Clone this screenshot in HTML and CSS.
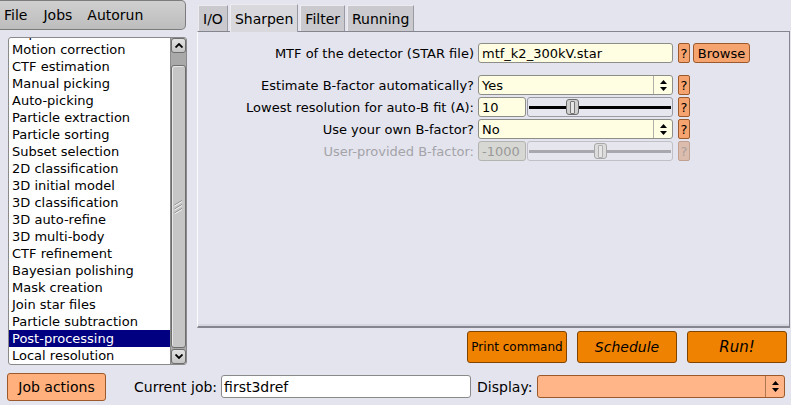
FILE: index.html
```html
<!DOCTYPE html>
<html>
<head>
<meta charset="utf-8">
<link rel="stylesheet" href="styles.css">
</head>
<body>
<div class="app">
  <div class="top">
    <div class="left">
      <div class="menubar"><span class="mi">File</span><span class="mi">Jobs</span><span class="mi">Autorun</span></div>
      <div class="joblist">
        <div class="items">
          <div class="item first">Import</div>
          <div class="item">Motion correction</div>
          <div class="item">CTF estimation</div>
          <div class="item">Manual picking</div>
          <div class="item">Auto-picking</div>
          <div class="item">Particle extraction</div>
          <div class="item">Particle sorting</div>
          <div class="item">Subset selection</div>
          <div class="item">2D classification</div>
          <div class="item">3D initial model</div>
          <div class="item">3D classification</div>
          <div class="item">3D auto-refine</div>
          <div class="item">3D multi-body</div>
          <div class="item">CTF refinement</div>
          <div class="item">Bayesian polishing</div>
          <div class="item">Mask creation</div>
          <div class="item">Join star files</div>
          <div class="item">Particle subtraction</div>
          <div class="item sel">Post-processing</div>
          <div class="item">Local resolution</div>
        </div>
        <div class="scrollbar">
          <div class="sb-btn"><svg width="8" height="5" viewBox="0 0 8 5"><path d="M0.5 4.5 L4 1 L7.5 4.5" fill="none" stroke="#000" stroke-width="1.8"/></svg></div>
          <div class="sb-track">
            <div class="sb-thumb"><svg width="9" height="14" viewBox="0 0 9 14"><path d="M0.5 5 L8 0.5 M0.5 9 L8 4.5 M0.5 13 L8 8.5" stroke="#8a8a8a" stroke-width="1"/><path d="M0.5 6 L8 1.5 M0.5 10 L8 5.5 M0.5 14 L8 9.5" stroke="#f2f2f2" stroke-width="1"/></svg></div>
          </div>
          <div class="sb-btn"><svg width="8" height="5" viewBox="0 0 8 5"><path d="M0.5 0.5 L4 4 L7.5 0.5" fill="none" stroke="#000" stroke-width="1.8"/></svg></div>
        </div>
      </div>
    </div>
    <div class="right">
      <div class="tabs">
        <div class="tab">I/O</div>
        <div class="tab active">Sharpen</div>
        <div class="tab">Filter</div>
        <div class="tab">Running</div>
      </div>
      <div class="panel">
        <div class="form">
          <div class="row gap-after">
            <div class="label">MTF of the detector (STAR file)</div>
            <div class="input wide">mtf_k2_300kV.star</div>
            <div class="help">?</div>
            <div class="browse">Browse</div>
          </div>
          <div class="row">
            <div class="label">Estimate B-factor automatically?</div>
            <div class="choice"><span class="ctext">Yes</span><span class="carrow"><svg width="7" height="11" viewBox="0 0 7 11"><path d="M0 4 L3.5 0 L7 4 Z M0 7 L3.5 11 L7 7 Z" fill="#000"/></svg></span></div>
            <div class="help">?</div>
          </div>
          <div class="row">
            <div class="label">Lowest resolution for auto-B fit (A):</div>
            <div class="input small">10</div>
            <div class="slider"><div class="track"></div><div class="thumb" style="left:38px"></div></div>
            <div class="help">?</div>
          </div>
          <div class="row">
            <div class="label">Use your own B-factor?</div>
            <div class="choice"><span class="ctext">No</span><span class="carrow"><svg width="7" height="11" viewBox="0 0 7 11"><path d="M0 4 L3.5 0 L7 4 Z M0 7 L3.5 11 L7 7 Z" fill="#000"/></svg></span></div>
            <div class="help">?</div>
          </div>
          <div class="row disabled">
            <div class="label">User-provided B-factor:</div>
            <div class="input small">-1000</div>
            <div class="slider"><div class="track"></div><div class="thumb" style="left:66px"></div></div>
            <div class="help">?</div>
          </div>
        </div>
      </div>
      <div class="actions">
        <div class="runbtn print">Print command</div>
        <div class="runbtn italic">Schedule</div>
        <div class="runbtn italic big">Run!</div>
      </div>
    </div>
  </div>
  <div class="bottom">
    <div class="jobactions">Job actions</div>
    <div class="blabel cur">Current job:</div>
    <div class="jobinput">first3dref</div>
    <div class="blabel disp">Display:</div>
    <div class="display"><span class="carrow"><svg width="7" height="11" viewBox="0 0 7 11"><path d="M0 4 L3.5 0 L7 4 Z M0 7 L3.5 11 L7 7 Z" fill="#000"/></svg></span></div>
  </div>
</div>
</body>
</html>
```

FILE: styles.css
```css
* { box-sizing: border-box; }
html, body {
  margin: 0;
  padding: 0;
}
body {
  width: 791px;
  height: 405px;
  overflow: hidden;
  background: #e4e4ee;
  font-family: "DejaVu Sans", sans-serif;
  color: #000;
}
.app {
  display: flex;
  flex-direction: column;
  width: 791px;
  height: 405px;
}
.top {
  display: flex;
  height: 368px;
}
.left {
  width: 197px;
  display: flex;
  flex-direction: column;
}
.menubar {
  width: 186px;
  height: 30px;
  background: linear-gradient(#cfcfcf, #bdbdbd);
  border: 1px solid #7c7c7c;
  border-left: none;
  border-radius: 0 5px 5px 0;
  display: flex;
  align-items: center;
  padding-left: 4px;
  font-size: 14px;
}
.mi { margin-right: 16px; }
.mi:nth-child(2) { margin-right: 15px; }

.joblist {
  margin: 7px 0 0 8px;
  width: 179px;
  height: 328px;
  border: 1px solid #8a8a8a;
  border-radius: 3px;
  background: #fff;
  display: flex;
  overflow: hidden;
}
.items {
  flex: 1;
  overflow: hidden;
  font-size: 13px;
}
.item {
  height: 17px;
  line-height: 17px;
  padding-left: 3px;
  white-space: nowrap;
}
.item.first { margin-top: -14px; }
.item.sel {
  background: #000080;
  color: #fff;
}
.scrollbar {
  width: 16px;
  background: #a9a9a9;
  display: flex;
  flex-direction: column;
  border-left: 1px solid #8c8c8c;
}
.sb-btn {
  height: 15px;
  margin: 0 0 0 0;
  background: linear-gradient(#e2e2e2, #c6c6c6);
  border: 1px solid #6e6e6e;
  border-radius: 3px;
  display: flex;
  align-items: center;
  justify-content: center;
}
.sb-track {
  flex: 1;
  display: flex;
  flex-direction: column;
  padding: 12px 0 1px 0;
}
.sb-thumb {
  flex: 1;
  background: #c6c6c6;
  border: 1px solid #6e6e6e;
  border-radius: 3px;
  box-shadow: inset 1px 1px 0 #e8e8e8;
  display: flex;
  align-items: center;
  justify-content: center;
}

.right {
  flex: 1;
  display: flex;
  flex-direction: column;
  padding-top: 4px;
}
.tabs {
  height: 27px;
  display: flex;
  align-items: flex-end;
  gap: 2px;
  padding-left: 1px;
  font-size: 14px;
}
.tab {
  height: 26px;
  padding: 0 4px;
  background: #c9c9ce;
  border: 1px solid #9a9aa2;
  border-top-color: #ececf0;
  border-left-color: #ececf0;
  border-bottom: none;
  display: flex;
  align-items: center;
}
.tab.active {
  height: 28px;
  margin-bottom: -1px;
  background: #d8d8dd;
  position: relative;
  z-index: 1;
}
.panel {
  height: 297px;
  margin-right: 1px;
  border-top: 1px solid #85858f;
  border-left: 1px solid #fbfbfd;
  border-right: 1px solid #85858f;
  border-bottom: 2px solid #85858f;
  box-shadow: inset 0 -2px 0 #d6d6df;
}
.form {
  padding-top: 11px;
  font-size: 13px;
}
.row {
  display: flex;
  align-items: center;
  height: 20px;
  margin-bottom: 2px;
}
.row.gap-after { margin-bottom: 12px; }
.label {
  width: 280px;
  padding-right: 4px;
  text-align: right;
  white-space: nowrap;
}
.input {
  height: 20px;
  background: #fffee2;
  border: 1px solid #8e8e88;
  border-radius: 3px;
  padding-left: 3px;
  display: flex;
  align-items: center;
  white-space: nowrap;
}
.input.wide { width: 195px; }
.input.small { width: 48px; }
.help {
  width: 12px;
  height: 20px;
  margin-left: 5px;
  background: #f6a46f;
  border: 1px solid #9c5a2c;
  border-radius: 2px;
  display: flex;
  align-items: center;
  justify-content: center;
  font-size: 13px;
}
.browse {
  width: 57px;
  height: 20px;
  margin-left: 3px;
  background: #f6a46f;
  border: 1px solid #9c5a2c;
  border-radius: 3px;
  display: flex;
  align-items: center;
  justify-content: center;
}
.choice {
  width: 195px;
  height: 20px;
  background: #fffee2;
  border: 1px solid #8e8e88;
  border-radius: 3px;
  display: flex;
  align-items: center;
}
.ctext {
  flex: 1;
  padding-left: 3px;
}
.carrow {
  width: 19px;
  height: 100%;
  border-left: 1px solid #b0b0a8;
  display: flex;
  align-items: center;
  justify-content: center;
}
.slider {
  position: relative;
  width: 146px;
  height: 20px;
  margin-left: 1px;
  border: 1px solid #9a9aa2;
  border-radius: 3px;
  background: #e6e6ef;
  display: flex;
  align-items: center;
  padding: 0 1px;
}
.track {
  flex: 1;
  height: 3px;
  background: #000;
}
.thumb {
  position: absolute;
  top: 1px;
  width: 13px;
  height: 16px;
  background: #cfcfcf;
  border: 1px solid #6c6c6c;
  border-radius: 3px;
  display: flex;
  align-items: center;
  justify-content: center;
}
.thumb::after {
  content: "";
  width: 3px;
  height: 11px;
  border: 1px solid #777;
  border-radius: 1px;
  background: #e6e6e6;
}
.row.disabled .label { color: #a3a3a8; }
.row.disabled .input {
  background: #d7d7d3;
  border-color: #b3b3b0;
  color: #9a9a9a;
}
.row.disabled .slider { border-color: #c0c0c6; }
.row.disabled .track { background: #a8a8ae; }
.row.disabled .thumb {
  background: #dcdcdc;
  border-color: #a8a8a8;
}
.row.disabled .thumb::after { border-color: #b0b0b0; }
.row.disabled .help {
  background: #dcbcac;
  border-color: #c0a090;
  color: #a8a0a0;
}

.actions {
  margin-top: 3px;
  height: 32px;
  display: flex;
  justify-content: flex-end;
  gap: 10px;
  padding-right: 4px;
}
.runbtn {
  width: 100px;
  height: 32px;
  background: #ef8200;
  border: 1px solid #804400;
  border-radius: 3px;
  display: flex;
  align-items: center;
  justify-content: center;
  font-size: 14px;
}
.runbtn.print { font-size: 12px; }
.runbtn.italic { font-style: italic; }
.runbtn.big { font-size: 15px; }

.bottom {
  height: 37px;
  display: flex;
  align-items: center;
  padding-left: 7px;
  font-size: 14px;
}
.jobactions {
  width: 99px;
  height: 28px;
  background: #ffb07c;
  border: 1px solid #9c5a2c;
  border-radius: 3px;
  display: flex;
  align-items: center;
  justify-content: center;
}
.blabel { white-space: nowrap; }
.blabel.cur { margin-left: 28px; margin-right: 4px; }
.blabel.disp { margin-left: 6px; margin-right: 5px; }
.jobinput {
  width: 250px;
  height: 23px;
  background: #fff;
  border: 1px solid #8a8a8a;
  border-radius: 3px;
  padding-left: 2px;
  display: flex;
  align-items: center;
}
.display {
  width: 248px;
  height: 23px;
  background: #ffb587;
  border: 1px solid #9c5a2c;
  border-radius: 3px;
  display: flex;
  justify-content: flex-end;
}
.display .carrow { border-left-color: #b07850; }
```
